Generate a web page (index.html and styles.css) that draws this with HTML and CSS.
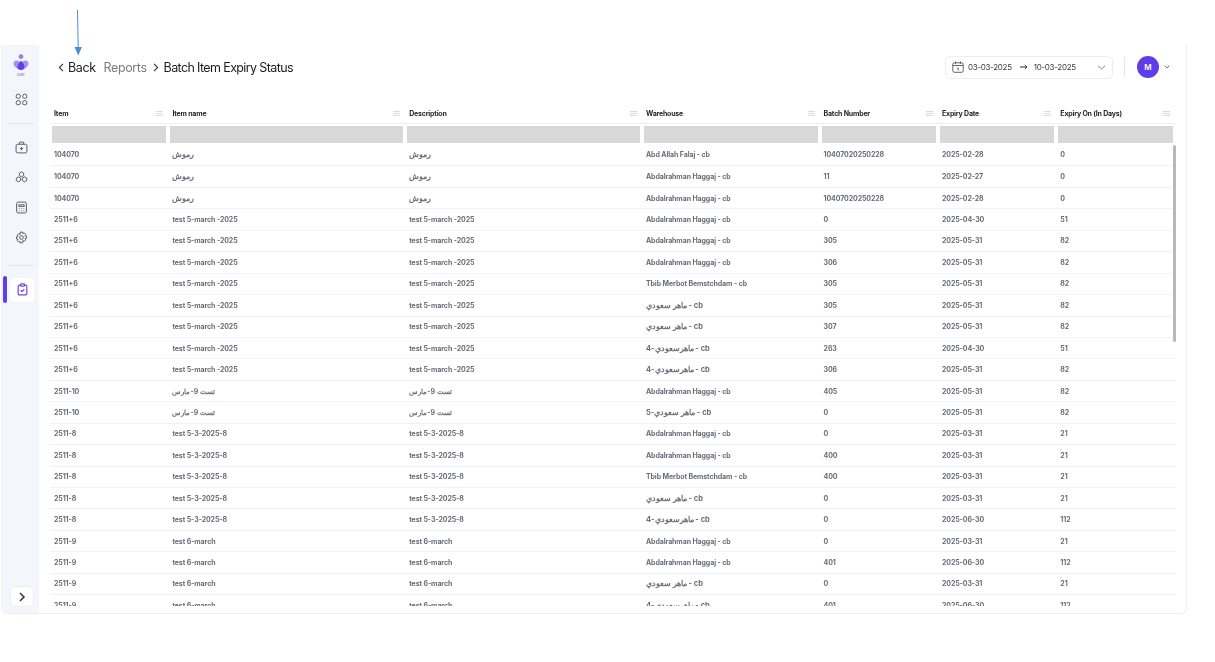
FILE: index.html
```html
<!DOCTYPE html>
<html lang="en">
<head>
<meta charset="utf-8">
<title>Batch Item Expiry Status</title>
<link rel="stylesheet" href="styles.css">
</head>
<body>
<svg class="annotation" width="20" height="60" viewBox="0 0 20 60"><path d="M7.5 10 L8.2 48" stroke="#4a90d9" stroke-width="1" fill="none"/><path d="M4.5 47 H12 L8.2 55.5 Z" fill="#4a90d9"/></svg>
<div class="frame">
  <aside class="sidebar">
    <div class="logo">
      <svg width="16" height="19" viewBox="0 0 16 19"><circle cx="8" cy="2.6" r="2.4" fill="#9a7fe6"/><path d="M0.5 9.5 C0.5 6.5 4.5 5 8 9 C11.5 5 15.500 6.500 15.500 9.500 C15.500 12 13 14 11 15 L5 15 C3 14 .5 12 .5 9.500 Z" fill="#a98fee"/><path d="M8 6.500 C9 8.500 11.500 10 11.500 12.500 A3.500 3.500 0 0 1 4.500 12.500 C4.500 10 7 8.500 8 6.500 Z" fill="#5f3de8"/></svg>
      <span class="logo-text">CARE</span>
    </div>
    <div class="side-item first">
      <svg class="ico" viewBox="0 0 12 12"><circle cx="3" cy="3" r="2"/><circle cx="9" cy="3" r="2"/><circle cx="3" cy="9" r="2"/><circle cx="9" cy="9" r="2"/></svg>
    </div>
    <hr class="side-rule">
    <div class="side-item">
      <svg class="ico" viewBox="0 0 12 12"><rect x="1" y="3" width="10" height="8" rx="1.500"/><path d="M4 3V1.500A.5.5 0 0 1 4.500 1h3a.5.5 0 0 1 .5.5V3M6 5.500v3M4.500 7h3"/></svg>
    </div>
    <div class="side-item">
      <svg class="ico" viewBox="0 0 12 12"><path d="M6 .8 8 2v2.200L6 5.400 4 4.200V2zM3.200 5.400l2 1.200v2.200l-2 1.200-2-1.200V6.600zM8.800 5.400l2 1.200v2.200l-2 1.200-2-1.200V6.600z"/></svg>
    </div>
    <div class="side-item">
      <svg class="ico" viewBox="0 0 12 12"><rect x="1.500" y="1" width="9" height="10" rx="1.500"/><path d="M3.500 3.500h5v1.500h-5zM3.500 7h.6M5.700 7h.6M7.900 7h.6M3.500 9h.6M5.700 9h.6M7.900 9h.6"/></svg>
    </div>
    <div class="side-item">
      <svg class="ico" viewBox="0 0 12 12"><circle cx="6" cy="6" r="1.700"/><path d="M5 1h2l.3 1.400 1.200-.7 1.400 1.400-.7 1.200 1.400.3v2l-1.400.3.700 1.200-1.400 1.400-1.200-.7L7 11H5l-.3-1.400-1.200.7-1.400-1.400.7-1.200L1.400 7.400v-2l1.400-.3-.7-1.200 1.400-1.400 1.200.7z"/></svg>
    </div>
    <hr class="side-rule second">
    <div class="side-active">
      <span class="active-bar"></span>
      <span class="active-box">
        <svg class="ico purple" viewBox="0 0 12 12"><rect x="2" y="2" width="8" height="9" rx="1.200"/><rect x="4.200" y=".8" width="3.600" height="2" rx=".6" fill="#fff"/><path d="M4.300 6.500 5.500 8l2.200-2.200"/></svg>
      </span>
    </div>
    <button class="expand" type="button" aria-label="Expand">
      <svg width="8" height="10" viewBox="0 0 8 10"><path d="M2 1l4 4-4 4" fill="none" stroke="#333" stroke-width="1.500"/></svg>
    </button>
  </aside>
  <main class="main">
    <header class="topbar">
      <nav class="crumbs">
        <svg class="chev-back" width="6" height="9" viewBox="0 0 6 9"><path d="M5 .8 1.400 4.500 5 8.200" fill="none" stroke="#333" stroke-width="1.100"/></svg>
        <span class="back">Back</span>
        <span class="muted">Reports</span>
        <svg class="chev-next" width="6" height="9" viewBox="0 0 6 9"><path d="M1 .8 4.600 4.500 1 8.200" fill="none" stroke="#333" stroke-width="1.100"/></svg>
        <span class="title">Batch Item Expiry Status</span>
      </nav>
      <div class="tools">
        <div class="dates">
          <svg width="12" height="12" viewBox="0 0 12 12" fill="none" stroke="#555" stroke-width=".9"><rect x=".8" y="1.800" width="10.400" height="9.500" rx="1.500"/><path d="M.8 4.500h10.400M3.500.5v2.400M8.500.5v2.400M5 7h1.200v2.500"/></svg>
          <span class="date-a">03-03-2025</span>
          <svg class="date-arrow" width="8" height="6" viewBox="0 0 8 6"><path d="M0 3h6.500M4.800 1 7 3 4.800 5" fill="none" stroke="#333" stroke-width="1"/></svg>
          <span class="date-b">10-03-2025</span>
          <svg class="date-chev" width="9" height="5" viewBox="0 0 9 5"><path d="M1 .8l3.500 3.200L8 .8" fill="none" stroke="#777" stroke-width=".9"/></svg>
        </div>
        <span class="vrule"></span>
        <span class="avatar">M</span>
        <svg class="user-chev" width="6" height="4" viewBox="0 0 6 4"><path d="M.6.6 3 3l2.400-2.400" fill="none" stroke="#666" stroke-width=".9"/></svg>
      </div>
    </header>
    <div class="table-wrap">
      <table class="grid">
        <colgroup><col class="u2"><col class="u4"><col class="u4"><col class="u3"><col class="u2"><col class="u2"><col class="u2"></colgroup>
        <thead>
          <tr class="heads">
            <th><span class="th-in">Item<i class="menu"></i></span></th>
            <th><span class="th-in">Item name<i class="menu"></i></span></th>
            <th><span class="th-in">Description<i class="menu"></i></span></th>
            <th><span class="th-in">Warehouse<i class="menu"></i></span></th>
            <th><span class="th-in">Batch Number<i class="menu"></i></span></th>
            <th><span class="th-in">Expiry Date<i class="menu"></i></span></th>
            <th><span class="th-in">Expiry On (In Days)<i class="menu"></i></span></th>
          </tr>
          <tr class="filters">
            <td><span class="filter"></span></td><td><span class="filter"></span></td><td><span class="filter"></span></td><td><span class="filter"></span></td><td><span class="filter"></span></td><td><span class="filter"></span></td><td><span class="filter"></span></td>
          </tr>
        </thead>
        <tbody>
          <tr><td>104070</td><td class="ar">رموش</td><td class="ar">رموش</td><td>Abd Allah Falaj - cb</td><td>10407020250228</td><td>2025-02-28</td><td>0</td></tr>
          <tr><td>104070</td><td class="ar">رموش</td><td class="ar">رموش</td><td>Abdalrahman Haggaj - cb</td><td>11</td><td>2025-02-27</td><td>0</td></tr>
          <tr><td>104070</td><td class="ar">رموش</td><td class="ar">رموش</td><td>Abdalrahman Haggaj - cb</td><td>10407020250228</td><td>2025-02-28</td><td>0</td></tr>
          <tr><td>2511+6</td><td>test 5-march -2025</td><td>test 5-march -2025</td><td>Abdalrahman Haggaj - cb</td><td>0</td><td>2025-04-30</td><td>51</td></tr>
          <tr><td>2511+6</td><td>test 5-march -2025</td><td>test 5-march -2025</td><td>Abdalrahman Haggaj - cb</td><td>305</td><td>2025-05-31</td><td>82</td></tr>
          <tr><td>2511+6</td><td>test 5-march -2025</td><td>test 5-march -2025</td><td>Abdalrahman Haggaj - cb</td><td>306</td><td>2025-05-31</td><td>82</td></tr>
          <tr><td>2511+6</td><td>test 5-march -2025</td><td>test 5-march -2025</td><td>Tbib Merbot Bemstchdam - cb</td><td>305</td><td>2025-05-31</td><td>82</td></tr>
          <tr><td>2511+6</td><td>test 5-march -2025</td><td>test 5-march -2025</td><td class="ar">ماهر سعودي - cb</td><td>305</td><td>2025-05-31</td><td>82</td></tr>
          <tr><td>2511+6</td><td>test 5-march -2025</td><td>test 5-march -2025</td><td class="ar">ماهر سعودي - cb</td><td>307</td><td>2025-05-31</td><td>82</td></tr>
          <tr><td>2511+6</td><td>test 5-march -2025</td><td>test 5-march -2025</td><td class="ar">ماهرسعودي-4 - cb</td><td>263</td><td>2025-04-30</td><td>51</td></tr>
          <tr><td>2511+6</td><td>test 5-march -2025</td><td>test 5-march -2025</td><td class="ar">ماهرسعودي-4 - cb</td><td>306</td><td>2025-05-31</td><td>82</td></tr>
          <tr><td>2511-10</td><td>تست 9-مارس</td><td>تست 9-مارس</td><td>Abdalrahman Haggaj - cb</td><td>405</td><td>2025-05-31</td><td>82</td></tr>
          <tr><td>2511-10</td><td>تست 9-مارس</td><td>تست 9-مارس</td><td class="ar">ماهر سعودي-5 - cb</td><td>0</td><td>2025-05-31</td><td>82</td></tr>
          <tr><td>2511-8</td><td>test 5-3-2025-8</td><td>test 5-3-2025-8</td><td>Abdalrahman Haggaj - cb</td><td>0</td><td>2025-03-31</td><td>21</td></tr>
          <tr><td>2511-8</td><td>test 5-3-2025-8</td><td>test 5-3-2025-8</td><td>Abdalrahman Haggaj - cb</td><td>400</td><td>2025-03-31</td><td>21</td></tr>
          <tr><td>2511-8</td><td>test 5-3-2025-8</td><td>test 5-3-2025-8</td><td>Tbib Merbot Bemstchdam - cb</td><td>400</td><td>2025-03-31</td><td>21</td></tr>
          <tr><td>2511-8</td><td>test 5-3-2025-8</td><td>test 5-3-2025-8</td><td class="ar">ماهر سعودي - cb</td><td>0</td><td>2025-03-31</td><td>21</td></tr>
          <tr><td>2511-8</td><td>test 5-3-2025-8</td><td>test 5-3-2025-8</td><td class="ar">ماهرسعودي-4 - cb</td><td>0</td><td>2025-06-30</td><td>112</td></tr>
          <tr><td>2511-9</td><td>test 6-march</td><td>test 6-march</td><td>Abdalrahman Haggaj - cb</td><td>0</td><td>2025-03-31</td><td>21</td></tr>
          <tr><td>2511-9</td><td>test 6-march</td><td>test 6-march</td><td>Abdalrahman Haggaj - cb</td><td>401</td><td>2025-06-30</td><td>112</td></tr>
          <tr><td>2511-9</td><td>test 6-march</td><td>test 6-march</td><td class="ar">ماهر سعودي - cb</td><td>0</td><td>2025-03-31</td><td>21</td></tr>
          <tr><td>2511-9</td><td>test 6-march</td><td>test 6-march</td><td class="ar">ماهرسعودي-4 - cb</td><td>401</td><td>2025-06-30</td><td>112</td></tr>
        </tbody>
      </table>
      <span class="scroll-thumb"></span>
    </div>
  </main>
</div>
</body>
</html>
```
FILE: styles.css
```css
* { box-sizing: border-box; }
html, body { margin: 0; height: 100%; background: #fff; overflow: hidden; }
body { padding: 45px 28px 0 1px; font-family: Inter, "Noto Sans", "Noto Sans CJK SC", sans-serif; color: #1c1c1c; }

.annotation { position: absolute; left: 70px; top: 0; z-index: 5; }

.frame {
  display: flex;
  width: 1186px;
  height: 569px;
  border: 1px solid #eeeef2;
  border-top: 0;
  border-radius: 0 0 6px 6px;
  overflow: hidden;
  filter: blur(.3px);
}

.sidebar {
  flex: 0 0 37px;
  padding-left: 1px;
  background: #f5f6fb;
  display: flex;
  flex-direction: column;
  align-items: center;
  position: relative;
}
.logo { display: flex; flex-direction: column; align-items: center; padding-top: 9px; height: 39px; }
.logo-text { font-size: 3px; line-height: 4px; color: #8f77e0; font-weight: 600; }
.side-item { height: 30px; display: flex; align-items: center; justify-content: center; }
.ico { width: 13px; height: 13px; fill: none; stroke: #555a63; stroke-width: .9; }
.ico.purple { stroke: #6c46e6; stroke-width: 1.100; }
.side-rule { width: 24px; height: 1px; margin: 9px 0 8px; border: 0; background: #e2e3e8; }
.side-rule.second { margin: 13px 0 10px; }
.side-active { width: 100%; height: 27px; display: flex; align-items: center; position: relative; }
.active-bar { position: absolute; left: 0; top: 0; width: 3.500px; height: 27px; border-radius: 2px; background: #5f3de8; }
.active-box { margin-left: 7px; width: 24px; height: 24px; border-radius: 5px; background: #fff; display: flex; align-items: center; justify-content: center; }
.expand {
  position: absolute; left: 8px; bottom: 6px;
  width: 24px; height: 21px; padding: 0;
  border: 1px solid #eeeef2; border-radius: 6px; background: #fff;
  display: flex; align-items: center; justify-content: center;
}

.main { flex: 1; min-width: 0; display: flex; flex-direction: column; padding: 0 9px 0 11px; background: #fff; }
.topbar { height: 44px; flex: none; display: flex; justify-content: space-between; align-items: center; padding: 0 7px 0 8px; }
.crumbs { display: flex; align-items: center; font-size: 12.500px; letter-spacing: -.4px; }
.chev-back { margin-right: 4px; }
.back { margin-right: 8px; }
.muted { color: #7d7d7d; margin-right: 6px; }
.chev-next { margin-right: 5px; }
.title { letter-spacing: -.62px; }

.tools { display: flex; align-items: center; }
.dates {
  width: 168px; height: 23px; display: flex; align-items: center;
  border: 1px solid #eeeef2; border-radius: 5px; padding: 0 6px 0 6px;
  font-size: 8px; letter-spacing: -.3px; color: #3d3d3d;
}
.date-a { margin-left: 4px; }
.date-arrow { margin: 0 6px 0 8px; }
.date-chev { margin-left: auto; }
.vrule { width: 1px; height: 20px; background: #e6e6ea; margin: 0 12px 0 11px; }
.avatar { width: 22px; height: 22px; border-radius: 50%; background: #5f3de8; color: #fff; font-size: 8px; font-weight: 600; display: flex; align-items: center; justify-content: center; }
.user-chev { margin-left: 5px; }

.table-wrap { flex: 1; min-height: 0; overflow: hidden; position: relative; margin-top: 14px; margin-bottom: 7px; }
.grid { width: 1124px; table-layout: fixed; border-collapse: collapse; font-size: 7px; }
.u2 { width: 118.400px; }
.u3 { width: 177.600px; }
.u4 { width: 236.800px; }
.heads th { height: 20px; padding: 1px 5px 0 4px; border-bottom: 1px solid #eeeef2; text-align: left; font-weight: 700; color: #26262b; }
.th-in { display: flex; align-items: center; justify-content: space-between; letter-spacing: -.2px; }
.menu { width: 7px; height: 5px; border-top: 1px solid #dcdcdf; border-bottom: 1px solid #dcdcdf; position: relative; }
.menu::after { content: ""; position: absolute; left: 0; right: 0; top: 1px; height: 1px; background: #dcdcdf; }
.filters td { padding: 2px 2px 2px; height: 21px; }
.filter { display: block; height: 17px; background: #d8d8d8; }
tbody td {
  height: 21.450px; padding: 0 4px;
  border-bottom: 1px solid #f1f2f6;
  color: #6a6c7b; font-weight: 700; letter-spacing: -.1px;
  white-space: nowrap; overflow: hidden;
}
tbody td.ar { font-size: 7.500px; letter-spacing: 0; }
.scroll-thumb { position: absolute; left: 1123px; top: 42px; width: 3px; height: 197px; background: #b8b8b8; border-radius: 2px; }
```
